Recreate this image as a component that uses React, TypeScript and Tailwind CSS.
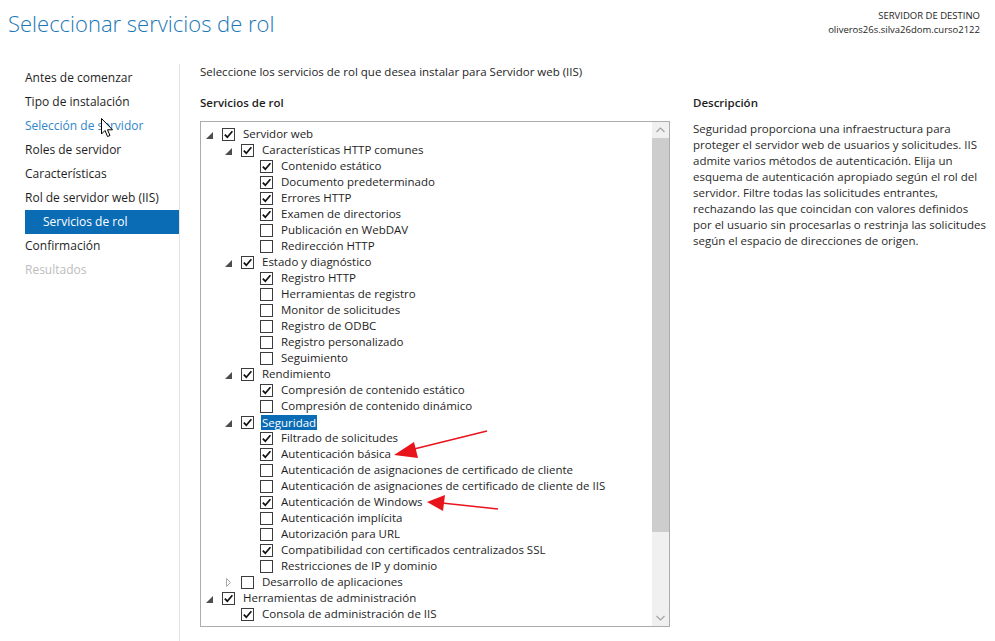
import { useState } from "react";

type Row = {
  label: string;
  level: number;
  checked: boolean;
  expand?: "open" | "closed";
  selected?: boolean;
};

const rows: Row[] = [
  { label: "Servidor web", level: 0, checked: true, expand: "open" },
  { label: "Características HTTP comunes", level: 1, checked: true, expand: "open" },
  { label: "Contenido estático", level: 2, checked: true },
  { label: "Documento predeterminado", level: 2, checked: true },
  { label: "Errores HTTP", level: 2, checked: true },
  { label: "Examen de directorios", level: 2, checked: true },
  { label: "Publicación en WebDAV", level: 2, checked: false },
  { label: "Redirección HTTP", level: 2, checked: false },
  { label: "Estado y diagnóstico", level: 1, checked: true, expand: "open" },
  { label: "Registro HTTP", level: 2, checked: true },
  { label: "Herramientas de registro", level: 2, checked: false },
  { label: "Monitor de solicitudes", level: 2, checked: false },
  { label: "Registro de ODBC", level: 2, checked: false },
  { label: "Registro personalizado", level: 2, checked: false },
  { label: "Seguimiento", level: 2, checked: false },
  { label: "Rendimiento", level: 1, checked: true, expand: "open" },
  { label: "Compresión de contenido estático", level: 2, checked: true },
  { label: "Compresión de contenido dinámico", level: 2, checked: false },
  { label: "Seguridad", level: 1, checked: true, expand: "open", selected: true },
  { label: "Filtrado de solicitudes", level: 2, checked: true },
  { label: "Autenticación básica", level: 2, checked: true },
  { label: "Autenticación de asignaciones de certificado de cliente", level: 2, checked: false },
  { label: "Autenticación de asignaciones de certificado de cliente de IIS", level: 2, checked: false },
  { label: "Autenticación de Windows", level: 2, checked: true },
  { label: "Autenticación implícita", level: 2, checked: false },
  { label: "Autorización para URL", level: 2, checked: false },
  { label: "Compatibilidad con certificados centralizados SSL", level: 2, checked: true },
  { label: "Restricciones de IP y dominio", level: 2, checked: false },
  { label: "Desarrollo de aplicaciones", level: 1, checked: false, expand: "closed" },
  { label: "Herramientas de administración", level: 0, checked: true, expand: "open" },
  { label: "Consola de administración de IIS", level: 1, checked: true },
];

const pads = ["pl-0", "pl-[19px]", "pl-[38px]"];

const navItems = [
  { label: "Antes de comenzar", kind: "normal" },
  { label: "Tipo de instalación", kind: "normal" },
  { label: "Selección de servidor", kind: "link" },
  { label: "Roles de servidor", kind: "normal" },
  { label: "Características", kind: "normal" },
  { label: "Rol de servidor web (IIS)", kind: "normal" },
  { label: "Servicios de rol", kind: "active" },
  { label: "Confirmación", kind: "normal" },
  { label: "Resultados", kind: "disabled" },
];

const description = [
  "Seguridad proporciona una infraestructura para",
  "proteger el servidor web de usuarios y solicitudes. IIS",
  "admite varios métodos de autenticación. Elija un",
  "esquema de autenticación apropiado según el rol del",
  "servidor. Filtre todas las solicitudes entrantes,",
  "rechazando las que coincidan con valores definidos",
  "por el usuario sin procesarlas o restrinja las solicitudes",
  "según el espacio de direcciones de origen.",
];

function Checkbox({ checked }: { checked: boolean }) {
  return (
    <span className="flex h-[13px] w-[13px] shrink-0 items-center justify-center border border-[#3c3c3c] bg-white">
      {checked && (
        <svg width="11" height="11" viewBox="0 0 11 11">
          <path d="M1.8 5.6 L4.3 8.2 L9.4 2.2" fill="none" stroke="#111" strokeWidth="1.7" />
        </svg>
      )}
    </span>
  );
}

function Expander({ state }: { state?: "open" | "closed" }) {
  if (state === "open") {
    return (
      <svg width="7" height="7" viewBox="0 0 7 7" className="mt-[2px]">
        <polygon points="7,0 7,7 0,7" fill="#4d4d4d" />
      </svg>
    );
  }
  if (state === "closed") {
    return (
      <svg width="7" height="9" viewBox="0 0 7 9">
        <polygon points="1.5,0.5 5.5,4.5 1.5,8.5" fill="none" stroke="#a8a8a8" strokeWidth="1" />
      </svg>
    );
  }
  return null;
}

export default function App() {
  const [items] = useState(rows);

  return (
    <div className="relative h-[641px] w-[995px] overflow-hidden bg-white font-['Open_Sans',sans-serif] text-[11.5px] text-[#1e1e1e]">
      {/* cabecera */}
      <div className="flex h-[64px] justify-between">
        <h1 className="pl-[8px] pt-[8px] text-[22px] leading-[30px] font-light text-[#1b77b5]">
          Seleccionar servicios de rol
        </h1>
        <div className="pr-[15px] pt-[9px] text-right text-[9.5px] leading-[14px] text-[#1e1e1e]">
          <div>SERVIDOR DE DESTINO</div>
          <div>oliveros26s.silva26dom.curso2122</div>
        </div>
      </div>

      <div className="flex h-[577px]">
        {/* navegación */}
        <nav className="w-[180px] shrink-0 border-r border-[#e3e3e3] pt-[2px] text-[12px]">
          {navItems.map((it) => (
            <div
              key={it.label}
              className={
                it.kind === "active"
                  ? "ml-[25px] flex h-[24px] items-center bg-[#0b6cb6] pl-[18px] text-white"
                  : it.kind === "link"
                  ? "ml-[25px] flex h-[24px] items-center text-[#2f86c9]"
                  : it.kind === "disabled"
                  ? "ml-[25px] flex h-[24px] items-center text-[#bdbdbd]"
                  : "ml-[25px] flex h-[24px] items-center text-[#1e1e1e]"
              }
            >
              {it.label}
            </div>
          ))}
        </nav>

        {/* contenido */}
        <div className="flex pl-[20px]">
          <div className="w-[470px] shrink-0">
            <p className="h-[16px] leading-[16px]">
              Seleccione los servicios de rol que desea instalar para Servidor web (IIS)
            </p>
            <h2 className="mt-[15px] h-[16px] leading-[16px] font-semibold">Servicios de rol</h2>
            <div className="mt-[10px] flex h-[506px] border border-[#acacac] bg-white">
              <div className="flex-1 overflow-hidden pt-[4px]">
                {items.map((r) => (
                  <div key={r.label} className={`flex h-[16px] items-center whitespace-nowrap ${pads[r.level]}`}>
                    <span className="flex h-[16px] w-[21px] shrink-0 items-center pl-[5px]">
                      <Expander state={r.expand} />
                    </span>
                    <Checkbox checked={r.checked} />
                    {r.selected ? (
                      <span className="ml-[7px] bg-[#0b6cb6] px-[1px] leading-[15px] text-white">{r.label}</span>
                    ) : (
                      <span className="ml-[8px] leading-[16px]">{r.label}</span>
                    )}
                  </div>
                ))}
              </div>
              {/* barra de desplazamiento */}
              <div className="flex w-[17px] shrink-0 flex-col bg-[#f0f0f0]">
                <div className="flex h-[16px] items-center justify-center">
                  <svg width="9" height="6" viewBox="0 0 9 6">
                    <path d="M0.5 5 L4.5 1 L8.5 5" fill="none" stroke="#a3a3a3" strokeWidth="1.2" />
                  </svg>
                </div>
                <div className="h-[394px] bg-[#cdcdcd]" />
                <div className="flex flex-1 items-end justify-center pb-[5px]">
                  <svg width="9" height="6" viewBox="0 0 9 6">
                    <path d="M0.5 1 L4.5 5 L8.5 1" fill="none" stroke="#a3a3a3" strokeWidth="1.2" />
                  </svg>
                </div>
              </div>
            </div>
          </div>

          <div className="ml-[23px] w-[300px]">
            <h2 className="mt-[31px] h-[16px] leading-[16px] font-semibold">Descripción</h2>
            <div className="mt-[10px] text-[#2a2a2a]">
              {description.map((l) => (
                <div key={l} className="h-[16px] whitespace-nowrap leading-[16px]">
                  {l}
                </div>
              ))}
            </div>
          </div>
        </div>
      </div>

      {/* flechas rojas */}
      <svg className="pointer-events-none absolute left-0 top-0" width="995" height="641">
        <line x1="487" y1="431" x2="410" y2="450" stroke="#e8141b" strokeWidth="1.6" />
        <polygon points="394,455 414,442 418,458" fill="#e8141b" />
        <line x1="498" y1="509" x2="442" y2="503" stroke="#e8141b" strokeWidth="1.6" />
        <polygon points="427,502 445,495 443,511" fill="#e8141b" />
      </svg>

      {/* cursor */}
      <svg className="pointer-events-none absolute left-[101px] top-[118px]" width="13" height="20" viewBox="0 0 13 20">
        <path
          d="M0.5 0.5 L0.5 16 L4 12.5 L6.5 18.5 L9 17.5 L6.5 11.8 L11.5 11.8 Z"
          fill="#fff"
          stroke="#000"
          strokeWidth="1"
          strokeLinejoin="round"
        />
      </svg>
    </div>
  );
}
